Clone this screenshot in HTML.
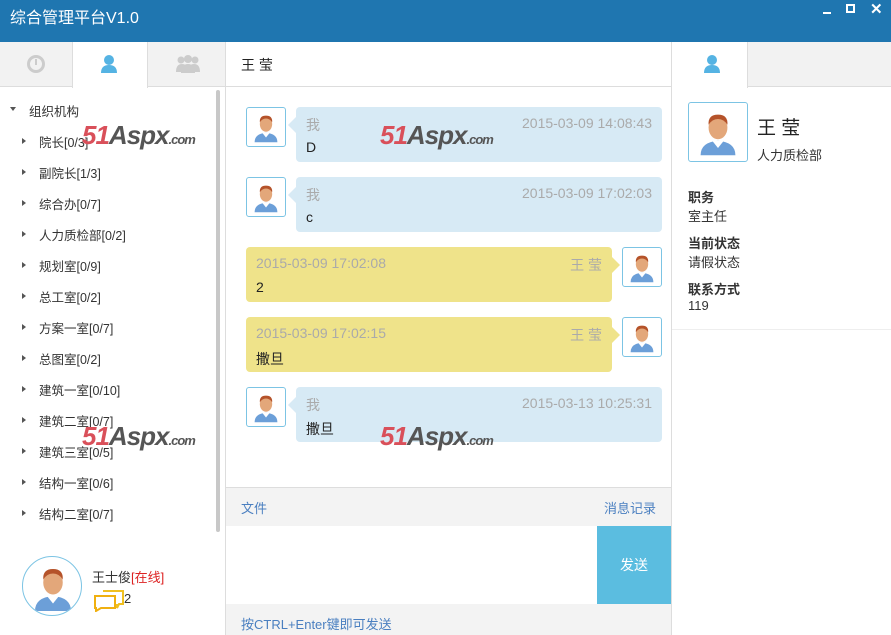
<!DOCTYPE html>
<html><head><meta charset="utf-8"><style>
*{margin:0;padding:0;box-sizing:border-box}
body{width:891px;height:635px;overflow:hidden;font-family:"Liberation Sans","Noto Sans CJK SC",sans-serif;font-size:13px;color:#333;background:#fff;position:relative}
.abs{position:absolute;white-space:nowrap}
.title{left:0;top:0;width:891px;height:42px;background:#1f76b0;color:#fff;font-size:16px;line-height:38px;padding-left:10px}
.tabbar{background:#f2f2f2;border-bottom:1px solid #ddd;height:45px;top:42px}
.tree div{position:absolute;left:0;font-size:12.5px;color:#333;white-space:nowrap}
.tri{position:absolute;width:0;height:0;border-left:4px solid #555;border-top:3px solid transparent;border-bottom:3px solid transparent}
.av{position:absolute;width:40px;height:40px;border:1px solid #7cc4e4;border-radius:3px;background:#fff}
.bub{position:absolute;left:296px;width:366px;height:55px;border-radius:4px;background:#d7eaf5}
.bub.y{left:246px;background:#efe38a}
.bub .n{position:absolute;top:8px;color:#aaa;font-size:14px}
.bub .t{position:absolute;top:8px;color:#aaa;font-size:14px}
.bub .m{position:absolute;top:32px;left:10px;font-size:14px;color:#222}
.wm{position:absolute;font:italic bold 26px "Liberation Sans",sans-serif;color:#d9505a;letter-spacing:-1px;white-space:nowrap}
.wm b{color:#555}.wm i{font-size:13px;color:#555;font-style:italic}
</style></head><body>
<svg width="0" height="0" style="position:absolute"><defs>
<symbol id="p" viewBox="0 0 40 40"><path d="M8 36 Q8 27 20 26 Q32 27 32 36Z" fill="#6c9fd8"/><path d="M16 26 L20 31 L24 26Z" fill="#fff"/><ellipse cx="20" cy="17" rx="6.5" ry="8" fill="#e3a77a"/><path d="M13.5 15 Q13 8 20 8 Q27 8 26.5 15 Q24 11 20 11 Q16 11 13.5 15Z" fill="#b5532a"/></symbol>
</defs></svg>
<div class="abs title">综合管理平台V1.0</div>
<div class="abs" style="left:823px;top:12px;width:8px;height:2px;background:#fff"></div>
<div class="abs" style="left:846px;top:4px;width:9px;height:9px;border:2px solid #fff"></div>
<div class="abs" style="left:870px;top:0px;color:#fff;font-size:15px;font-weight:bold">✕</div>

<div class="abs tabbar" style="left:0;width:226px"></div>
<div class="abs" style="left:72px;top:42px;width:76px;height:46px;background:#fff;border-left:1px solid #ddd;border-right:1px solid #ddd"></div>
<div class="abs" style="left:27px;top:55px;width:18px;height:18px;border:3px solid #ccc;border-radius:50%"></div>
<div class="abs" style="left:35px;top:59px;width:2px;height:6px;background:#ccc"></div>
<svg class="abs" style="left:100px;top:54px" width="18" height="20" viewBox="0 0 18 20"><circle cx="9" cy="6" r="5" fill="#55b3e3"/><path d="M1 19 Q1 11 9 11 Q17 11 17 19Z" fill="#55b3e3"/></svg>
<svg class="abs" style="left:176px;top:54px" width="24" height="20" viewBox="0 0 24 20"><circle cx="5" cy="6" r="3.5" fill="#ccc"/><circle cx="19" cy="6" r="3.5" fill="#ccc"/><circle cx="12" cy="5" r="4" fill="#ccc"/><path d="M0 18 Q0 10 6 10 Q12 10 12 18Z M12 18 Q12 10 18 10 Q24 10 24 18Z M5 19 Q5 10 12 10 Q19 10 19 19Z" fill="#ccc"/></svg>
<div class="abs" style="left:225px;top:42px;width:1px;height:593px;background:#ddd"></div>
<div class="abs" style="left:216px;top:90px;width:4px;height:442px;background:#c8c8c8;border-radius:2px"></div>
<div class="tree abs" style="left:0;top:0">
<div style="left:10px;top:107px;width:0;height:0;border-top:4px solid #555;border-left:3px solid transparent;border-right:3px solid transparent"></div>
<div style="left:29px;top:101px">组织机构</div>
</div>
<div id="tree"></div>
<div class="abs" style="left:22px;top:556px;width:60px;height:60px;border:1px solid #7cc4e4;border-radius:50%;overflow:hidden"><svg width="60" height="60" viewBox="0 0 40 40"><use href="#p"/></svg></div>
<div class="abs" style="left:92px;top:567px;font-size:13px">王士俊<span style="color:#d22">[在线]</span></div>
<svg class="abs" style="left:93px;top:588px" width="32" height="24" viewBox="0 0 32 24"><path d="M10 3 H30 V16 H26 L24 20 V16" fill="none" stroke="#f0c020" stroke-width="2"/><path d="M2 8 H22 V20 H8 L3 23 V20 H2Z" fill="#fff" stroke="#f0b010" stroke-width="2"/></svg>
<div class="abs" style="left:124px;top:591px;font-size:13px">2</div>

<div class="abs tabbar" style="left:226px;width:446px;background:#fff"></div>
<div class="abs" style="left:241px;top:55px;font-size:14px;color:#222">王 莹</div>
<div class="abs" style="left:671px;top:42px;width:1px;height:593px;background:#ddd"></div>
<div id="msgs"></div>
<div class="abs" style="left:226px;top:487px;width:445px;height:39px;background:#f3f3f3;border-top:1px solid #ddd"></div>
<div class="abs" style="left:241px;top:498px;color:#4a7fc0">文件</div>
<div class="abs" style="left:604px;top:498px;color:#4a7fc0">消息记录</div>
<div class="abs" style="left:597px;top:526px;width:74px;height:78px;background:#5bbde0;color:#fff;font-size:14px;line-height:78px;text-align:center">发送</div>
<div class="abs" style="left:226px;top:604px;width:445px;height:31px;background:#f3f3f3"></div>
<div class="abs" style="left:241px;top:614px;color:#4a7fc0">按CTRL+Enter键即可发送</div>

<div class="abs tabbar" style="left:672px;width:219px"></div>
<div class="abs" style="left:672px;top:42px;width:76px;height:46px;background:#fff;border-right:1px solid #ddd"></div>
<svg class="abs" style="left:703px;top:54px" width="18" height="20" viewBox="0 0 18 20"><circle cx="9" cy="6" r="5" fill="#55b3e3"/><path d="M1 19 Q1 11 9 11 Q17 11 17 19Z" fill="#55b3e3"/></svg>
<div class="av" style="left:688px;top:102px;width:60px;height:60px"><svg width="58" height="58" viewBox="0 0 40 40"><use href="#p"/></svg></div>
<div class="abs" style="left:757px;top:113px;font-size:19px;color:#222">王 莹</div>
<div class="abs" style="left:757px;top:145px;font-size:13px">人力质检部</div>
<div class="abs" style="left:688px;top:187px;font-weight:bold">职务</div>
<div class="abs" style="left:688px;top:206px">室主任</div>
<div class="abs" style="left:688px;top:233px;font-weight:bold">当前状态</div>
<div class="abs" style="left:688px;top:252px">请假状态</div>
<div class="abs" style="left:688px;top:279px;font-weight:bold">联系方式</div>
<div class="abs" style="left:688px;top:298px">119</div>
<div class="abs" style="left:672px;top:329px;width:219px;height:1px;background:#eee"></div>

<div class="wm" style="left:82px;top:120px">51<b>Aspx</b><i>.com</i></div>
<div class="wm" style="left:380px;top:120px">51<b>Aspx</b><i>.com</i></div>
<div class="wm" style="left:82px;top:421px">51<b>Aspx</b><i>.com</i></div>
<div class="wm" style="left:380px;top:421px">51<b>Aspx</b><i>.com</i></div>

<script>
var t=["院长[0/3]","副院长[1/3]","综合办[0/7]","人力质检部[0/2]","规划室[0/9]","总工室[0/2]","方案一室[0/7]","总图室[0/2]","建筑一室[0/10]","建筑二室[0/7]","建筑三室[0/5]","结构一室[0/6]","结构二室[0/7]"],h="";
t.forEach(function(s,i){var y=132+i*31;h+='<div class="tri" style="left:22px;top:'+(y+6)+'px"></div><div class="abs" style="left:39px;top:'+y+'px;font-size:12.5px">'+s+'</div>'});
document.getElementById("tree").innerHTML=h;
var m=[[0,"D","2015-03-09 14:08:43"],[0,"c","2015-03-09 17:02:03"],[1,"2","2015-03-09 17:02:08"],[1,"撒旦","2015-03-09 17:02:15"],[0,"撒旦","2015-03-13 10:25:31"]];h="";
m.forEach(function(a,i){var y=107+i*70;
if(!a[0]){h+='<div class="av" style="left:246px;top:'+y+'px"><svg width="38" height="38" viewBox="0 0 40 40"><use href="#p"/></svg></div><div class="bub" style="top:'+y+'px"><div class="abs" style="left:-8px;top:10px;border-right:8px solid #d7eaf5;border-top:8px solid transparent;border-bottom:8px solid transparent"></div><span class="n" style="left:10px">我</span><span class="t" style="right:10px">'+a[2]+'</span><span class="m">'+a[1]+'</span></div>'}
else{h+='<div class="av" style="left:622px;top:'+y+'px"><svg width="38" height="38" viewBox="0 0 40 40"><use href="#p"/></svg></div><div class="bub y" style="top:'+y+'px"><div class="abs" style="right:-8px;top:10px;border-left:8px solid #efe38a;border-top:8px solid transparent;border-bottom:8px solid transparent"></div><span class="t" style="left:10px">'+a[2]+'</span><span class="n" style="right:10px">王 莹</span><span class="m">'+a[1]+'</span></div>'}});
document.getElementById("msgs").innerHTML=h;
</script>
</body></html>
